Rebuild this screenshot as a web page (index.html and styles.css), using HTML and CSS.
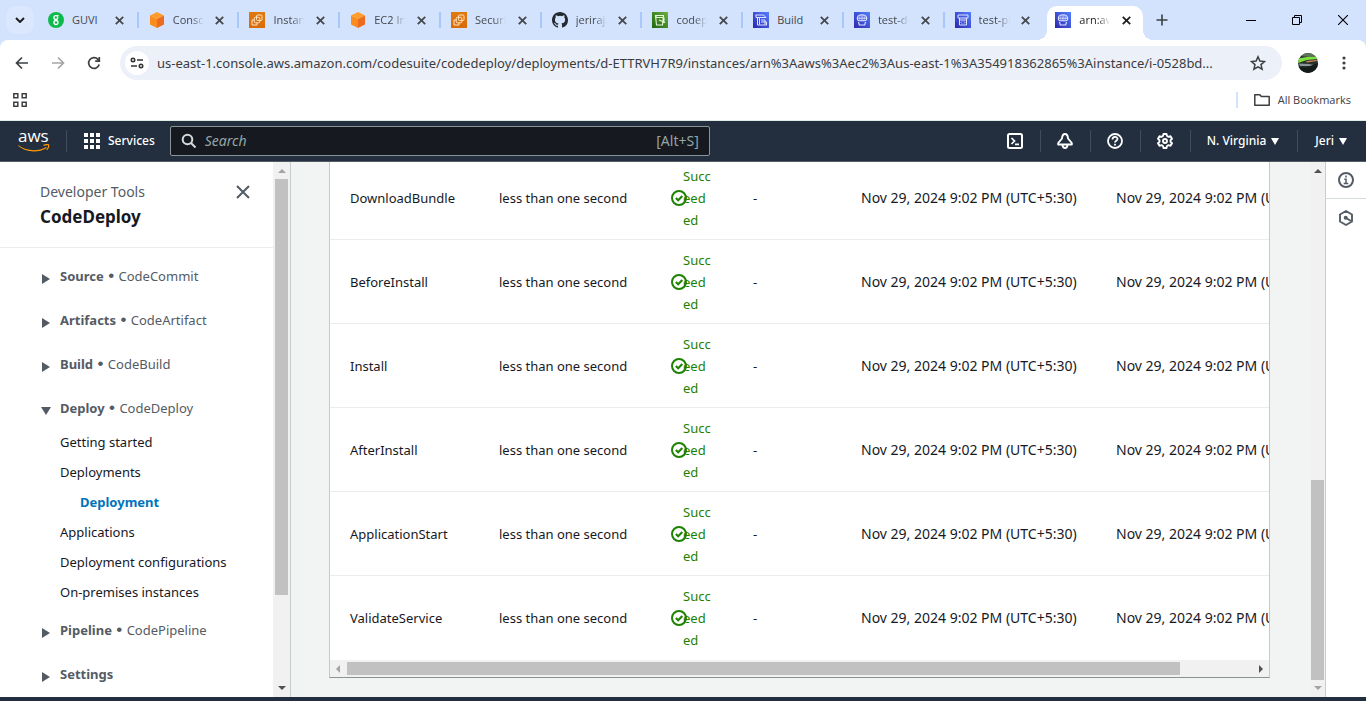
FILE: index.html
```html
<!DOCTYPE html>
<html lang="en">
<head>
<meta charset="utf-8">
<title>CodeDeploy</title>
<link rel="stylesheet" href="styles.css">
</head>
<body>
<svg class="defs" aria-hidden="true">
  <defs>
    <linearGradient id="g-blue" x1="0" y1="1" x2="1" y2="0"><stop offset="0" stop-color="#2e27ad"/><stop offset="1" stop-color="#527fff"/></linearGradient>
    <linearGradient id="g-orange" x1="0" y1="0" x2="0" y2="1"><stop offset="0" stop-color="#e07a0c"/><stop offset="1" stop-color="#d96b0a"/></linearGradient>
    <linearGradient id="g-green" x1="0" y1="1" x2="1" y2="0"><stop offset="0" stop-color="#1b660f"/><stop offset="1" stop-color="#6cae3e"/></linearGradient>
    <symbol id="x" viewBox="0 0 8 8"><path d="M.7.7l6.600 6.600M7.300.7L.7 7.300" stroke="currentColor" stroke-width="1.600" fill="none"/></symbol>
    <symbol id="cube" viewBox="0 0 16 16"><path d="M8 0l7 3.500-7 3.500-7-3.500z" fill="#ff9d2b"/><path d="M1 3.500L8 7v9l-7-3.500z" fill="#f98c1d"/><path d="M15 3.500L8 7v9l7-3.500z" fill="#ee6a1c"/></symbol>
    <symbol id="ec2" viewBox="0 0 16 16"><path fill="url(#g-orange)" d="M0 0h16v16H0z"/><g fill="none" stroke="#ffe3c4" stroke-width="1"><rect x="7.500" y="3" width="5.500" height="5.500" rx="1"/><rect x="5.300" y="5.300" width="5.500" height="5.500" rx="1"/><path d="M5 8H3v5h5v-2"/></g></symbol>
    <symbol id="cd" viewBox="0 0 16 16"><path fill="url(#g-blue)" d="M0 0h16v16H0z"/><g fill="none" stroke="#dfe4ff" stroke-width="1.100"><path d="M5 8.800C2.500 8 2.500 2.800 8 2.800S13.500 8 11 8.800z"/><path d="M3.500 6.200h9M8 3v6" stroke-width=".9"/><path d="M6.300 3.200c-.8 2-.8 3.600 0 5.500M9.700 3.200c.8 2 .8 3.600 0 5.500" stroke-width=".7"/><path d="M4.500 10l.8 3h5.400l.8-3"/></g></symbol>
    <symbol id="pipe" viewBox="0 0 16 16"><path fill="url(#g-blue)" d="M0 0h16v16H0z"/><g fill="none" stroke="#dfe4ff" stroke-width="1"><path d="M3 3h10v3H3zM4.500 6v7h7V6M5 8h6M7 9.500L6 10.500l1 1M9 9.500l1 1-1 1"/></g></symbol>
    <symbol id="build" viewBox="0 0 16 16"><path fill="url(#g-blue)" d="M0 0h16v16H0z"/><g fill="none" stroke="#dfe4ff" stroke-width="1"><path d="M2.500 3h8l2.500 2.500H6.500M4.500 5.500v7.500h9M3 3v2.500h3.500v7M8 8h4v4.500M8 10h5.500v3"/></g></symbol>
    <symbol id="s3" viewBox="0 0 16 16"><path fill="url(#g-green)" d="M0 0h16v16H0z"/><g fill="none" stroke="#e4f4dc" stroke-width="1.100"><path d="M3.500 3.500h8l-1 9.500h-6zM3.500 3.500l1 2h7M7 8l6 2.500M12 5.500v4"/></g></symbol>
    <symbol id="ok" viewBox="0 0 16 16"><g fill="none" stroke="currentColor" stroke-width="2"><circle cx="8" cy="8" r="7"/><path d="M4.800 8l2.400 2.300L11.300 6"/></g></symbol>
  </defs>
</svg>

<header class="browser">
  <div class="tabstrip">
    <button class="tabsearch" aria-label="Search tabs"><svg viewBox="0 0 10 6" width="10" height="6"><path d="M1 1l4 4 4-4" fill="none" stroke="#1f1f1f" stroke-width="2"/></svg></button>
    <div class="tabs">
      <div class="tab"><svg class="fav" viewBox="0 0 16 16"><circle cx="8" cy="8" r="8" fill="#0fba4c"/><g fill="none" stroke="#fff" stroke-width="1.300"><circle cx="7.800" cy="5.500" r="1.900"/><circle cx="8" cy="10.500" r="2"/><path d="M9 4l1.500-.8M7 7.500l2 1"/></g></svg><span class="tabname whole">GUVI</span><button class="close" aria-label="Close tab"><svg><use href="#x"/></svg></button></div>
      <div class="tab"><svg class="fav"><use href="#cube"/></svg><span class="tabname">Console</span><button class="close" aria-label="Close tab"><svg><use href="#x"/></svg></button></div>
      <div class="tab"><svg class="fav"><use href="#ec2"/></svg><span class="tabname">Instances</span><button class="close" aria-label="Close tab"><svg><use href="#x"/></svg></button></div>
      <div class="tab"><svg class="fav"><use href="#cube"/></svg><span class="tabname">EC2 Inst</span><button class="close" aria-label="Close tab"><svg><use href="#x"/></svg></button></div>
      <div class="tab"><svg class="fav"><use href="#ec2"/></svg><span class="tabname">Security</span><button class="close" aria-label="Close tab"><svg><use href="#x"/></svg></button></div>
      <div class="tab"><svg class="fav" viewBox="0 0 16 16"><path fill="#24292f" d="M8 0C3.580 0 0 3.580 0 8c0 3.540 2.290 6.530 5.470 7.590.4.070.55-.17.55-.38v-1.490c-2.010.37-2.530-.49-2.690-.94-.09-.23-.48-.94-.82-1.130-.28-.15-.68-.52-.01-.53.63-.01 1.080.58 1.230.82.72 1.210 1.870.87 2.330.66.07-.52.28-.87.51-1.070-1.780-.2-3.640-.89-3.640-3.950 0-.87.31-1.590.82-2.150-.08-.2-.36-1.020.08-2.120 0 0 .67-.21 2.200.82a7.500 7.500 0 0 1 4 0c1.530-1.040 2.200-.82 2.200-.82.44 1.100.16 1.920.08 2.120.51.56.82 1.270.82 2.150 0 3.070-1.870 3.750-3.650 3.950.29.25.54.73.54 1.480v2.200c0 .21.15.46.55.38A8 8 0 0 0 16 8c0-4.420-3.580-8-8-8z"/></svg><span class="tabname">jerirajan</span><button class="close" aria-label="Close tab"><svg><use href="#x"/></svg></button></div>
      <div class="tab"><svg class="fav"><use href="#s3"/></svg><span class="tabname">codepipe</span><button class="close" aria-label="Close tab"><svg><use href="#x"/></svg></button></div>
      <div class="tab"><svg class="fav"><use href="#build"/></svg><span class="tabname whole">Build</span><button class="close" aria-label="Close tab"><svg><use href="#x"/></svg></button></div>
      <div class="tab"><svg class="fav"><use href="#cd"/></svg><span class="tabname">test-dep</span><button class="close" aria-label="Close tab"><svg><use href="#x"/></svg></button></div>
      <div class="tab last"><svg class="fav"><use href="#pipe"/></svg><span class="tabname">test-pip</span><button class="close" aria-label="Close tab"><svg><use href="#x"/></svg></button></div>
      <div class="tab active"><svg class="fav"><use href="#cd"/></svg><span class="tabname">arn:aws</span><button class="close" aria-label="Close tab"><svg><use href="#x"/></svg></button></div>
    </div>
    <button class="newtab" aria-label="New tab"><svg viewBox="0 0 12 12" width="12" height="12"><path d="M6 .5v11M.5 6h11" stroke="#3c4043" stroke-width="1.600"/></svg></button>
    <div class="winctl">
      <button aria-label="Minimize"><svg viewBox="0 0 10 10"><path d="M0 5.500h10" stroke="#000"/></svg></button>
      <button aria-label="Restore"><svg viewBox="0 0 10 10"><path d="M.5 2.500h7v7h-7zM2.500 2V.5h7v7H8" stroke="#000" fill="none"/></svg></button>
      <button aria-label="Close"><svg viewBox="0 0 10 10"><path d="M0 0l10 10M10 0L0 10" stroke="#000" stroke-width="1.100"/></svg></button>
    </div>
  </div>
  <div class="toolbar">
    <button class="navbtn" aria-label="Back"><svg viewBox="0 0 16 16"><path d="M14 8H3M8 2.500L2.500 8 8 13.500" fill="none" stroke="#3c4043" stroke-width="1.700"/></svg></button>
    <button class="navbtn" aria-label="Forward"><svg viewBox="0 0 16 16"><path d="M2 8h11M8 2.500L13.500 8 8 13.500" fill="none" stroke="#a6a6a6" stroke-width="1.700"/></svg></button>
    <button class="navbtn" aria-label="Reload"><svg viewBox="0 0 16 16"><path d="M13.200 9.500A5.400 5.400 0 1 1 12 4.300l1 1.200M13.300 2v4.200H9.200" fill="none" stroke="#3c4043" stroke-width="1.700"/></svg></button>
    <div class="omnibox">
      <button class="siteinfo" aria-label="View site information"><svg viewBox="0 0 14 14" width="14" height="14"><g fill="none" stroke="#333" stroke-width="1.600"><circle cx="3" cy="4" r="1.700"/><path d="M7 4h6M1 10h6"/><circle cx="11" cy="10" r="1.700"/></g></svg></button>
      <input class="url" type="text" aria-label="Address" value="us-east-1.console.aws.amazon.com/codesuite/codedeploy/deployments/d-ETTRVH7R9/instances/arn%3Aaws%3Aec2%3Aus-east-1%3A354918362865%3Ainstance/i-0528bd...">
      <button class="star" aria-label="Bookmark this tab"><svg viewBox="0 0 16 16" width="16" height="16"><path d="M8 1.800l1.900 4.300 4.600.4-3.500 3.100 1.100 4.600L8 11.800l-4.100 2.400L5 9.600 1.500 6.500l4.600-.4z" fill="none" stroke="#3c4043" stroke-width="1.500"/></svg></button>
    </div>
    <button class="avatar" aria-label="Profile"><svg viewBox="0 0 20 20" width="20" height="20"><clipPath id="av"><circle cx="10" cy="10" r="10"/></clipPath><g clip-path="url(#av)"><path fill="#25332b" d="M0 0h20v20H0z"/><path fill="#5d7358" d="M3 0h17v3l-9 1-8-1z"/><path fill="#7ee03e" d="M0 5.500l9-1.500 11-.5V6L9 7l-9 3z"/><path fill="#d78454" d="M8 8l11-1v1L9 9.500z"/><path fill="#8b969c" d="M1 10.500l10 .5 5 1v2l-5-1-9 0z"/><path fill="#151b18" d="M0 14l8 .5L20 10v10H0z"/></g></svg></button>
    <button class="menu" aria-label="Menu"><svg viewBox="0 0 4 14" width="4" height="14"><g fill="#3c4043"><circle cx="2" cy="2" r="1.600"/><circle cx="2" cy="7" r="1.600"/><circle cx="2" cy="12" r="1.600"/></g></svg></button>
  </div>
  <div class="bookmarks">
    <button class="apps" aria-label="Apps"><svg viewBox="0 0 14 14" width="14" height="14"><path d="M.8.8h4v4h-4zM9.200.8h4v4h-4zM.8 9.200h4v4h-4zM9.200 9.200h4v4h-4z" fill="none" stroke="#3c4043" stroke-width="1.500"/></svg></button>
    <button class="allbm"><svg viewBox="0 0 16 12" width="16" height="12"><path d="M.8.8h5l1.600 1.800h7.800v8.600H.8z" fill="none" stroke="#3c4043" stroke-width="1.500" stroke-linejoin="round"/></svg>All Bookmarks</button>
  </div>
</header>

<nav class="awsbar">
  <a class="aws" href="#"><span>aws</span><svg viewBox="0 0 32 8" width="32" height="8"><path d="M0 1c8 6 20 7 28 2l.8 1C20 9.500 7 8.500 0 1.600z" fill="#f90"/><path d="M25.500 1.500c2-1 4-1 5-.7.4 1.200-.3 3.500-1.800 5" fill="none" stroke="#f90" stroke-width="1.200"/></svg></a>
  <button class="services"><svg viewBox="0 0 16 16" width="16" height="16"><path fill="#fff" d="M0 0h4v4H0zM6 0h4v4H6zM12 0h4v4h-4zM0 6h4v4H0zM6 6h4v4H6zM12 6h4v4h-4zM0 12h4v4H0zM6 12h4v4H6zM12 12h4v4h-4z"/></svg>Services</button>
  <label class="search"><svg viewBox="0 0 16 16" width="16" height="16"><circle cx="6.500" cy="6.500" r="4.800" fill="none" stroke="#d5dbdb" stroke-width="2"/><path d="M10 10l4.500 4.500" stroke="#d5dbdb" stroke-width="2"/></svg><input type="text" aria-label="Search" placeholder="Search"><span>[Alt+S]</span></label>
  <div class="awsright">
    <button class="ico" aria-label="CloudShell"><svg viewBox="0 0 16 16"><g fill="none" stroke="#fff" stroke-width="2"><rect x="1" y="1" width="14" height="14" rx="1.500"/><path d="M4.500 5L7.500 8l-3 3M8 11.300h4" stroke-width="1.700"/></g></svg></button>
    <button class="ico" aria-label="Notifications"><svg viewBox="0 0 16 16"><path d="M8 1C6 1 5.200 2.500 5 5.500L1.200 10v1.500h13.600V10L11 5.500C10.800 2.500 10 1 8 1zM5.500 12c.3 4 4.700 4 5 0" fill="none" stroke="#fff" stroke-width="1.900" stroke-linejoin="round"/></svg></button>
    <button class="ico" aria-label="Help"><svg viewBox="0 0 16 16"><g fill="none" stroke="#fff" stroke-width="1.800"><circle cx="8" cy="8" r="7"/><path d="M5.500 6.500C5.500 3 10.500 3.200 10.500 6c0 1.800-2.500 1.700-2.500 3.500M8 10.800v1.700"/></g></svg></button>
    <button class="ico" aria-label="Settings"><svg viewBox="0 0 16 16"><g fill="none" stroke="#fff" stroke-width="1.900" stroke-linejoin="round"><path d="M6.500 1h3l.5 2 1.500.8 2-.6L15 5.800 13.500 7.200v1.600L15 10.200l-1.500 2.600-2-.6L10 13l-.5 2h-3L6 13l-1.500-.8-2 .6L1 10.200l1.500-1.400V7.200L1 5.800l1.500-2.600 2 .6L6 3z"/><circle cx="8" cy="8" r="2"/></g></svg></button>
    <button class="region">N. Virginia<span class="caret"></span></button>
    <button class="user">Jeri<span class="caret"></span></button>
  </div>
</nav>

<div class="page">
  <aside class="side">
    <div class="sidecontent">
      <div class="sidehead">
        <div><a class="parent" href="#">Developer Tools</a><h2>CodeDeploy</h2></div>
        <button class="sideclose" aria-label="Close navigation"><svg viewBox="0 0 14 14" width="14" height="14"><path d="M1 1l12 12M13 1L1 13" stroke="#545b64" stroke-width="2"/></svg></button>
      </div>
      <ul class="groups">
        <li><button><i class="tri"></i><span><b>Source</b> <span class="dot">•</span> CodeCommit</span></button></li>
        <li><button><i class="tri"></i><span><b>Artifacts</b> <span class="dot">•</span> CodeArtifact</span></button></li>
        <li><button><i class="tri"></i><span><b>Build</b> <span class="dot">•</span> CodeBuild</span></button></li>
        <li class="open"><button><i class="tri"></i><span><b>Deploy</b> <span class="dot">•</span> CodeDeploy</span></button>
          <ul class="links">
            <li><a href="#">Getting started</a></li>
            <li><a href="#">Deployments</a></li>
            <li class="current"><a href="#">Deployment</a></li>
            <li><a href="#">Applications</a></li>
            <li><a href="#">Deployment configurations</a></li>
            <li><a href="#">On-premises instances</a></li>
          </ul>
        </li>
        <li><button><i class="tri"></i><span><b>Pipeline</b> <span class="dot">•</span> CodePipeline</span></button></li>
        <li><button><i class="tri"></i><span><b>Settings</b></span></button></li>
      </ul>
    </div>
    <div class="vbar"><i class="up dim"></i><div class="track"><div class="thumb side-thumb"></div></div><i class="down"></i></div>
  </aside>

  <main class="main">
    <div class="card">
      <table>
        <colgroup><col class="c-event"><col class="c-dur"><col class="c-status"><col class="c-err"><col class="c-time"><col class="c-time"></colgroup>
        <tbody>
          <tr><td>DownloadBundle</td><td>less than one second</td><td><div class="status"><svg><use href="#ok"/></svg><span>Succ<wbr>eed<wbr>ed</span></div></td><td>-</td><td class="time">Nov 29, 2024 9:02 PM (UTC+5:30)</td><td class="time">Nov 29, 2024 9:02 PM (UTC+5:30)</td></tr>
          <tr><td>BeforeInstall</td><td>less than one second</td><td><div class="status"><svg><use href="#ok"/></svg><span>Succ<wbr>eed<wbr>ed</span></div></td><td>-</td><td class="time">Nov 29, 2024 9:02 PM (UTC+5:30)</td><td class="time">Nov 29, 2024 9:02 PM (UTC+5:30)</td></tr>
          <tr><td>Install</td><td>less than one second</td><td><div class="status"><svg><use href="#ok"/></svg><span>Succ<wbr>eed<wbr>ed</span></div></td><td>-</td><td class="time">Nov 29, 2024 9:02 PM (UTC+5:30)</td><td class="time">Nov 29, 2024 9:02 PM (UTC+5:30)</td></tr>
          <tr><td>AfterInstall</td><td>less than one second</td><td><div class="status"><svg><use href="#ok"/></svg><span>Succ<wbr>eed<wbr>ed</span></div></td><td>-</td><td class="time">Nov 29, 2024 9:02 PM (UTC+5:30)</td><td class="time">Nov 29, 2024 9:02 PM (UTC+5:30)</td></tr>
          <tr><td>ApplicationStart</td><td>less than one second</td><td><div class="status"><svg><use href="#ok"/></svg><span>Succ<wbr>eed<wbr>ed</span></div></td><td>-</td><td class="time">Nov 29, 2024 9:02 PM (UTC+5:30)</td><td class="time">Nov 29, 2024 9:02 PM (UTC+5:30)</td></tr>
          <tr><td>ValidateService</td><td>less than one second</td><td><div class="status"><svg><use href="#ok"/></svg><span>Succ<wbr>eed<wbr>ed</span></div></td><td>-</td><td class="time">Nov 29, 2024 9:02 PM (UTC+5:30)</td><td class="time">Nov 29, 2024 9:02 PM (UTC+5:30)</td></tr>
        </tbody>
      </table>
      <div class="hbar"><i class="left"></i><div class="htrack"><div class="hthumb"></div></div><i class="right"></i></div>
    </div>
  </main>
  <div class="vbar mainbar"><i class="up"></i><div class="track end"><div class="thumb main-thumb"></div></div><i class="down dim"></i></div>
  <aside class="tools">
    <button aria-label="Info"><svg viewBox="0 0 16 16"><g fill="none" stroke="#545b64" stroke-width="2"><circle cx="8" cy="8" r="7"/><path d="M8 3.500v2M6.300 7.200H8v4M5.700 11.400h4.600" stroke-width="1.500"/></g></svg></button>
    <button aria-label="Resources"><svg viewBox="0 0 16 16"><path d="M8 1l6 3.500v7L8 15l-6-3.500v-7z" fill="none" stroke="#545b64" stroke-width="1.900" stroke-linejoin="round"/><circle cx="7.700" cy="7.700" r="2" fill="#545b64"/><path d="M8 8l5 3" stroke="#545b64" stroke-width="2"/></svg></button>
  </aside>
</div>
<footer class="foot"></footer>
</body>
</html>
```
FILE: styles.css
```css
* { box-sizing: border-box; }
html, body { height: 100%; }
body {
  margin: 0;
  display: flex;
  flex-direction: column;
  overflow: hidden;
  font-family: "Noto Sans", sans-serif;
  font-size: 13px;
  line-height: 22px;
  color: #16191f;
  background: #fff;
}
button { font: inherit; color: inherit; background: none; border: 0; padding: 0; cursor: pointer; }
input { font: inherit; border: 0; outline: 0; background: none; padding: 0; min-width: 0; }
a { color: inherit; text-decoration: none; }
ul { list-style: none; margin: 0; padding: 0; }
svg { display: block; flex: none; }
.defs { position: absolute; width: 0; height: 0; }

/* Browser frame */
.browser { font-family: "Open Sans", sans-serif; background: #d3e3fd; flex: none; }
.tabstrip { display: flex; height: 40px; align-items: center; }
.tabsearch { width: 28px; height: 28px; margin: 0 6px; border-radius: 10px; background: #dbe7fc; display: grid; place-items: center; flex: none; }
.tabs { display: flex; flex: 0 1 1108px; min-width: 0; height: 100%; }
.tab { flex: 1 1 0; min-width: 0; display: flex; align-items: center; padding: 0 13px 0 8px; position: relative; font-size: 11px; color: #45484d; }
.tab::after { content: ""; position: absolute; right: 2px; top: 12px; width: 2px; height: 16px; background: #a8c7fa; }
.tab.last::after { display: none; }
.fav { width: 16px; height: 16px; margin-right: 8px; }
.tabname { width: 31px; overflow: hidden; white-space: nowrap; flex: none; -webkit-mask-image: linear-gradient(90deg, #000 60%, transparent); mask-image: linear-gradient(90deg, #000 60%, transparent); }
.tabname.whole { -webkit-mask-image: none; mask-image: none; }
.close { margin-left: auto; padding: 4px; }
.close svg { width: 9px; height: 9px; }
.tab.active { align-self: flex-end; flex-basis: 2px; height: 34px; padding: 0 8px 6px 8px; margin-right: 5px; background: #fff; border-radius: 10px 10px 0 0; color: #1f1f1f; }
.tab.active::before, .tab.active::after { content: ""; position: absolute; top: auto; bottom: 0; width: 10px; height: 10px; }
.tab.active::before { left: -10px; background: radial-gradient(circle at 0 0, transparent 10px, #fff 10px); }
.tab.active::after { right: -10px; background: radial-gradient(circle at 100% 0, transparent 10px, #fff 10px); }
.newtab { width: 28px; height: 28px; display: grid; place-items: center; flex: none; }
.winctl { margin-left: auto; display: flex; flex: none; }
.winctl button { width: 46px; height: 40px; display: grid; place-items: center; }
.winctl svg { width: 10px; height: 10px; }
.toolbar { background: #fff; border-radius: 8px 8px 0 0; display: flex; align-items: center; height: 46px; padding: 0 10px 0 4px; }
.navbtn { width: 36px; height: 34px; display: grid; place-items: center; flex: none; }
.navbtn svg { width: 16px; height: 16px; }
.omnibox { flex: 1; min-width: 0; height: 34px; margin-left: 8px; border-radius: 17px; background: #ecf0f9; display: flex; align-items: center; padding: 0 16px 0 5px; }
.siteinfo { width: 24px; height: 24px; border-radius: 50%; background: #fff; display: grid; place-items: center; flex: none; }
.url { flex: 1; margin: 0 8px; font-family: "Noto Sans", sans-serif; font-size: 13px; color: #3a3c40; text-overflow: ellipsis; }
.avatar { margin: 0 24px 0 16px; }
.menu { margin-right: 10px; }
.bookmarks { background: #fff; height: 35px; padding: 0 15px 7px 13px; display: flex; align-items: center; justify-content: space-between; border-bottom: 1px solid #e1ebe6; }
.allbm { display: flex; align-items: center; gap: 8px; height: 16px; border-left: 2px solid #d3e3fd; padding-left: 16px; font-size: 11px; color: #3c4043; }

/* AWS header */
.awsbar { flex: none; display: flex; align-items: center; height: 41px; background: #232f3e; border-bottom: 1px solid #545b64; color: #fff; font-size: 12px; font-weight: 500; }
.aws { width: 67px; height: 22px; padding-left: 18px; border-right: 1px solid #414d5c; flex: none; }
.aws span { display: block; font: 500 17px/12px "Open Sans", sans-serif; height: 14px; }
.services { display: flex; gap: 8px; align-items: center; padding: 0 15px 0 17px; flex: none; }
.search { width: 540px; flex: 0 1 540px; min-width: 0; height: 30px; display: flex; align-items: center; padding: 0 10px; background: #161a20; border: 1px solid #879596; border-radius: 2px; color: #95a5a6; font-size: 14px; font-weight: 400; }
.search input { flex: 1; margin: 0 8px; color: #fff; }
.search input::placeholder { color: #95a5a6; font-style: italic; opacity: 1; }
.awsright { margin-left: auto; display: flex; }
.awsright button { height: 22px; border-right: 1px solid #414d5c; display: flex; align-items: center; justify-content: center; flex: none; }
.awsright .user { border: 0; padding: 0 19px 0 17px; }
.awsright .region { padding: 0 18px 0 16px; }
.ico { width: 50px; }
.ico svg { width: 16px; height: 16px; }
.caret { border: 4px solid transparent; border-top: 7px solid #fff; border-bottom: 0; margin-left: 5px; }

/* Page */
.page { flex: 1; min-height: 0; display: flex; }
.side { width: 291px; flex: none; display: flex; border-right: 1px solid #c6cfcf; }
.sidecontent { flex: 1; overflow: hidden; }
.sidehead { display: flex; justify-content: space-between; align-items: flex-start; padding: 19px 23px 18px 40px; border-bottom: 1px solid #eaeded; }
.parent { color: #545b64; font-size: 14px; display: block; }
.sidehead h2 { margin: 2px 0 0; font-size: 17px; line-height: 24px; font-weight: 700; }
.sideclose { padding: 4px 0; }
.groups { padding: 17px 0 0 40px; color: #545b64; }
.groups > li { margin-bottom: 22px; }
.groups > .open { margin-bottom: 16px; }
.groups button { display: flex; align-items: center; height: 22px; }
.groups b { font-weight: 700; }
.dot { font-family: "Liberation Sans", sans-serif; font-size: 17px; line-height: 16px; margin: 0 1px; }
.tri { flex: none; margin: 5px 10px 0 2px; border: 5px solid transparent; border-left: 8px solid #545b64; border-right: 0; }
.open .tri { margin: 5px 9px 0 1px; border: 5px solid transparent; border-top: 8px solid #545b64; border-bottom: 0; }
.links { padding: 12px 0 0 20px; display: flex; flex-direction: column; gap: 8px; color: #16191f; }
.current { padding-left: 20px; color: #0073bb; font-weight: 700; }

.vbar { width: 17px; flex: none; background: #f1f1f1; display: flex; flex-direction: column; align-items: center; padding: 7px 0; gap: 6px; }
.mainbar { width: 15px; }
.track { flex: 1; width: 13px; display: flex; flex-direction: column; }
.track.end { justify-content: flex-end; }
.thumb, .hthumb { background: #c1c1c1; }
.side-thumb { height: 83%; }
.main-thumb { height: 40%; }
.up, .down, .left, .right { flex: none; border: 4px solid transparent; }
.up { border-top: 0; border-bottom-color: #505050; }
.down { border-bottom: 0; border-top-color: #505050; }
.left { border-left: 0; border-right-color: #a3a3a3; }
.right { border-right: 0; border-left-color: #505050; }
.up.dim { border-bottom-color: #a3a3a3; }
.down.dim { border-top-color: #a3a3a3; }

.main { flex: 1; min-width: 0; overflow: hidden; background: #f2f3f3; display: flex; flex-direction: column; justify-content: flex-end; padding: 0 40px 19px 38px; }
.card { overflow: hidden; flex: none; background: #fff; border: 1px solid #c3cbcb; border-bottom-color: #879596; }
table { table-layout: fixed; width: 1021px; border-collapse: separate; border-spacing: 0; }
.c-event { width: 149px; }
.c-dur { width: 172px; }
.c-status { width: 82px; }
.c-err { width: 108px; }
.c-time { width: 255px; }
td { height: 84px; padding: 0 0 0 20px; white-space: nowrap; border-bottom: 1px solid #eaeded; }
tr:last-child td { border-bottom-color: #fff; }
.time { font-size: 14px; }
.status { display: flex; align-items: center; color: #1d8102; white-space: normal; position: relative; padding-left: 12px; }
.status svg { position: absolute; left: 0; width: 16px; height: 16px; }
.status span { width: 30px; }
.hbar { display: flex; align-items: center; height: 17px; background: #f1f1f1; padding: 0 6px; gap: 7px; }
.htrack { flex: 1; height: 13px; }
.hthumb { width: 92%; height: 100%; }

.tools { width: 41px; flex: none; border-left: 1px solid #c6cfcf; }
.tools button { display: grid; place-items: center; width: 100%; height: 37px; border-bottom: 1px solid #d5dbdb; }
.tools button:last-child { border: 0; }
.tools svg { width: 16px; height: 16px; }
.foot { flex: none; height: 4px; background: #232f3e; }
```
